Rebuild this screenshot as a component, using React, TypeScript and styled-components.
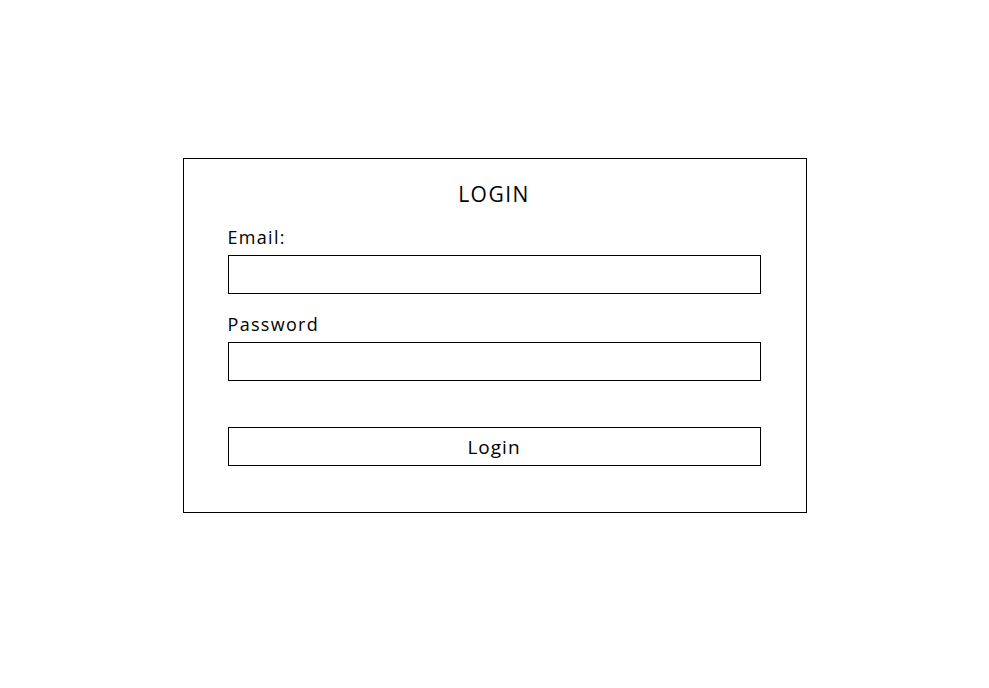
import React from "react";
import styled, { createGlobalStyle } from "styled-components";

const GlobalStyle = createGlobalStyle`
  * { box-sizing: border-box; }
  html, body { margin: 0; padding: 0; background: #ffffff; }
  body { font-family: "Open Sans", "Liberation Sans", sans-serif; color: #000000; }
`;

const Page = styled.div`
  display: flex;
  justify-content: center;
  align-items: flex-start;
  padding-top: 158px;
  width: 989px;
  min-height: 688px;
`;

const Card = styled.form`
  width: 624px;
  border: 1px solid #000000;
  padding: 21px 45px 46px 44px;
  display: flex;
  flex-direction: column;
`;

const Title = styled.h1`
  margin: 0 0 17px;
  font-size: 21px;
  line-height: 28px;
  font-weight: 500;
  text-align: center;
  letter-spacing: 1.5px;
`;

const Label = styled.label<{ $gapTop?: number }>`
  display: block;
  margin: ${(p) => p.$gapTop ?? 0}px 0 6px;
  font-size: 18px;
  line-height: 24px;
  font-weight: 500;
  letter-spacing: 1.3px;
`;

const Input = styled.input`
  display: block;
  width: 100%;
  height: 39px;
  border: 1px solid #000000;
  border-radius: 0;
  padding: 0 8px;
  font-family: inherit;
  font-size: 16px;
  outline: none;
  background: #ffffff;
`;

const Button = styled.button`
  display: block;
  width: 100%;
  height: 39px;
  margin-top: 46px;
  border: 1px solid #000000;
  border-radius: 0;
  background: #ffffff;
  color: #000000;
  font-family: inherit;
  font-size: 19px;
  font-weight: 500;
  letter-spacing: 1px;
  padding: 0;
  cursor: pointer;
`;

export default function App() {
  return (
    <>
      <GlobalStyle />
      <Page>
        <Card onSubmit={(e) => e.preventDefault()}>
          <Title>LOGIN</Title>
          <Label htmlFor="email">Email:</Label>
          <Input id="email" type="email" />
          <Label htmlFor="password" $gapTop={18}>Password</Label>
          <Input id="password" type="password" />
          <Button type="submit">Login</Button>
        </Card>
      </Page>
    </>
  );
}
